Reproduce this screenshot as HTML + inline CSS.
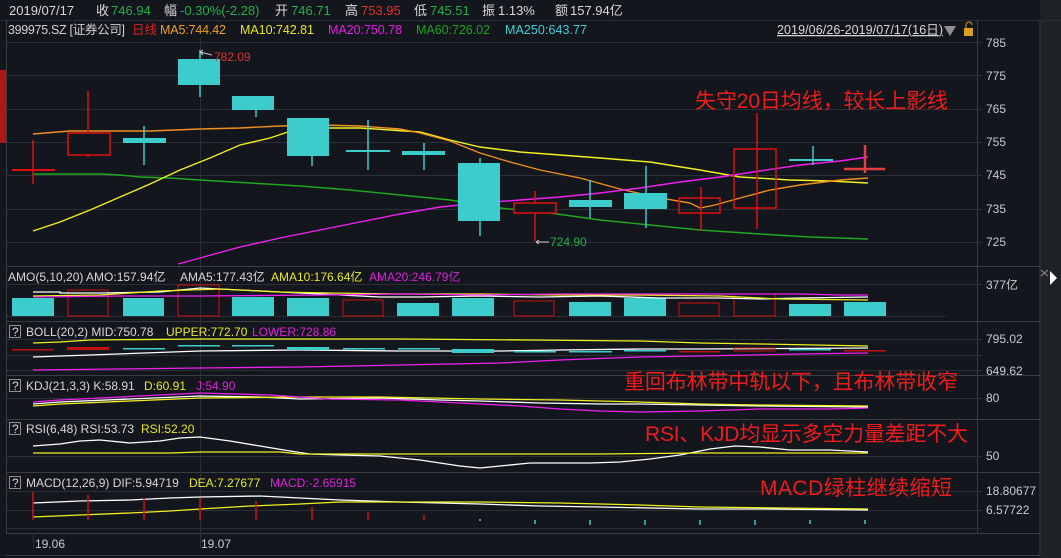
<!DOCTYPE html>
<html><head><meta charset="utf-8"><style>
html,body{margin:0;padding:0;background:#13161c;width:1061px;height:558px;overflow:hidden}
svg{display:block}
text{font-family:"Liberation Sans","Noto Sans CJK SC",sans-serif}
</style></head><body>
<svg width="1061" height="558" viewBox="0 0 1061 558" xmlns="http://www.w3.org/2000/svg">
<rect width="1061" height="558" fill="#13161c"/>
<rect x="1040" y="0" width="21" height="558" fill="#1f2227"/>
<line x1="1040" y1="20" x2="1040" y2="555" stroke="#3a3d42"/>
<rect x="0" y="70" width="6" height="73" fill="#b01818"/>
<line x1="0" y1="20.5" x2="1061" y2="20.5" stroke="#2a2d32"/>
<g font-size="13">
<text x="9" y="15" fill="#d8d8d8">2019/07/17</text>
<text x="96" y="15" fill="#d8d8d8">收</text><text x="111" y="15" fill="#21b04a">746.94</text>
<text x="164" y="15" fill="#d8d8d8">幅</text><text x="180" y="15" fill="#21b04a">-0.30%(-2.28)</text>
<text x="275" y="15" fill="#d8d8d8">开</text><text x="291" y="15" fill="#21b04a">746.71</text>
<text x="345" y="15" fill="#d8d8d8">高</text><text x="361" y="15" fill="#e03030">753.95</text>
<text x="414" y="15" fill="#d8d8d8">低</text><text x="430" y="15" fill="#21b04a">745.51</text>
<text x="482" y="15" fill="#d8d8d8">振</text><text x="498" y="15" fill="#d8d8d8">1.13%</text>
<text x="555" y="15" fill="#d8d8d8">额</text><text x="570" y="15" fill="#d8d8d8">157.94亿</text>
</g>
<g font-size="12.5">
<text x="8" y="34" fill="#d0d0d0" textLength="117">399975.SZ [证券公司]</text>
<text x="132" y="34" fill="#e02020">日线</text>
<text x="160" y="34" fill="#f0a020" textLength="66">MA5:744.42</text>
<text x="240" y="34" fill="#e8e820" textLength="74">MA10:742.81</text>
<text x="328" y="34" fill="#e020e0" textLength="74">MA20:750.78</text>
<text x="416" y="34" fill="#20a020" textLength="74">MA60:726.02</text>
<text x="505" y="34" fill="#40d0d8" textLength="82">MA250:643.77</text>
<text x="777" y="34" fill="#d8d8d8" text-decoration="underline" textLength="166">2019/06/26-2019/07/17(16日)</text>
</g>
<polygon points="944,26 956,26 950,36" fill="#909090"/>
<rect x="964" y="28" width="9" height="8" fill="#d8a020"/>
<path d="M966,28 v-3 a3,3 0 0 1 6,0" fill="none" stroke="#d8a020"/>
<line x1="6.5" y1="20" x2="6.5" y2="533" stroke="#3a3d42"/>
<line x1="977.5" y1="20" x2="977.5" y2="533" stroke="#3a3d42"/>
<g stroke="#3a3d42">
<line x1="6" y1="266.5" x2="1040" y2="266.5"/>
<line x1="6" y1="321.5" x2="1040" y2="321.5"/>
<line x1="6" y1="375.5" x2="1040" y2="375.5"/>
<line x1="6" y1="419.5" x2="1040" y2="419.5"/>
<line x1="6" y1="472.5" x2="1040" y2="472.5"/>
<line x1="6" y1="533.5" x2="1040" y2="533.5"/>
<line x1="6" y1="555.5" x2="1040" y2="555.5"/>
</g>
<g stroke="#2c2f34">
<line x1="7" y1="42.5" x2="982" y2="42.5"/><line x1="7" y1="75.5" x2="982" y2="75.5"/>
<line x1="7" y1="109.5" x2="982" y2="109.5"/><line x1="7" y1="142.5" x2="982" y2="142.5"/>
<line x1="7" y1="175.5" x2="982" y2="175.5"/><line x1="7" y1="209.5" x2="982" y2="209.5"/>
<line x1="7" y1="242.5" x2="982" y2="242.5"/>
<line x1="7" y1="284.5" x2="982" y2="284.5"/>
<line x1="7" y1="339.5" x2="982" y2="339.5"/><line x1="7" y1="355.5" x2="982" y2="355.5"/><line x1="7" y1="370.5" x2="982" y2="370.5"/>
<line x1="7" y1="398.5" x2="982" y2="398.5"/>
<line x1="7" y1="456.5" x2="982" y2="456.5"/>
<line x1="7" y1="491.5" x2="982" y2="491.5"/><line x1="7" y1="510.5" x2="982" y2="510.5"/><line x1="7" y1="528.5" x2="982" y2="528.5"/>
<line x1="200.5" y1="38" x2="200.5" y2="548"/>
<line x1="33.5" y1="533" x2="33.5" y2="548"/>
</g>
<g font-size="12" fill="#c8ccd0">
<text x="986" y="47">785</text><text x="986" y="80">775</text><text x="986" y="113">765</text>
<text x="986" y="146">755</text><text x="986" y="179">745</text><text x="986" y="213">735</text>
<text x="986" y="246">725</text>
<text x="986" y="289">377亿</text>
<text x="986" y="343">795.02</text><text x="986" y="375">649.62</text>
<text x="986" y="402">80</text><text x="986" y="460">50</text>
<text x="986" y="495">18.80677</text><text x="986" y="514">6.57722</text>
<text x="35" y="548">19.06</text><text x="201" y="548">19.07</text>
</g>
<path d="M1041,270 l7,6 M1048,270 l-7,6" stroke="#909090"/>
<polygon points="1050,271 1057,278 1050,285" fill="#ffffff"/>
<g fill="none" stroke-width="1.4">
<polyline stroke="#20a820" points="33,174 100,174 120,175 140,177 170,178 200,180 250,183 300,186 350,190 400,195 450,200 500,208 550,213 600,220 650,225 700,230 760,234 810,237 868,239"/>
<polyline stroke="#f0f020" points="33,231 60,222 90,210 120,197 150,184 180,170 210,158 240,145 270,138 300,128 330,128 360,128 390,130 420,132 450,140 480,147 520,152 560,155 600,158 650,162 700,170 740,177 790,180 830,181 868,183"/>
<polyline stroke="#f09020" points="33,134 70,131 110,131 150,131 200,129 240,128 280,126 320,125 360,126 400,129 420,133 450,141 480,153 510,162 540,170 580,178 620,189 660,198 690,203 700,208 715,205 740,198 770,190 800,185 840,180 868,178"/>
<polyline stroke="#f020f0" points="178,264 200,258 240,247 280,238 320,230 360,222 400,214 440,207 480,203 520,200 560,197 600,193 640,188 680,182 720,177 760,171 800,165 840,161 868,157"/>
</g>
<g stroke-width="1.5">
<line x1="33" y1="140" x2="33" y2="184" stroke="#e01010"/><line x1="12" y1="170" x2="55" y2="170" stroke="#e01010" stroke-width="2"/>
<line x1="88" y1="91" x2="88" y2="157" stroke="#e01010"/><rect x="68" y="133" width="42" height="22" fill="#13161c" stroke="#e01010"/>
<line x1="144" y1="126" x2="144" y2="165" stroke="#3ccccc"/><rect x="123" y="138" width="43" height="5" fill="#3ccccc" stroke="none"/>
<line x1="200" y1="50" x2="200" y2="97" stroke="#3ccccc"/><rect x="178" y="59" width="42" height="26" fill="#3ccccc" stroke="none"/>
<line x1="256" y1="105" x2="256" y2="117" stroke="#3ccccc"/><rect x="232" y="96" width="42" height="14" fill="#3ccccc" stroke="none"/>
<line x1="312" y1="118" x2="312" y2="166" stroke="#3ccccc"/><rect x="287" y="118" width="42" height="38" fill="#3ccccc" stroke="none"/>
<line x1="368" y1="120" x2="368" y2="170" stroke="#3ccccc"/><line x1="346" y1="151" x2="390" y2="151" stroke="#3ccccc" stroke-width="2"/>
<line x1="424" y1="143" x2="424" y2="170" stroke="#3ccccc"/><rect x="402" y="151" width="43" height="4" fill="#3ccccc" stroke="none"/>
<line x1="480" y1="158" x2="480" y2="236" stroke="#3ccccc"/><rect x="458" y="163" width="42" height="58" fill="#3ccccc" stroke="none"/>
<line x1="535" y1="191" x2="535" y2="241" stroke="#e01010"/><rect x="514" y="203" width="42" height="10" fill="#13161c" stroke="#e01010"/>
<line x1="590" y1="180" x2="590" y2="218" stroke="#3ccccc"/><rect x="569" y="200" width="43" height="7" fill="#3ccccc" stroke="none"/>
<line x1="646" y1="166" x2="646" y2="228" stroke="#3ccccc"/><rect x="624" y="193" width="43" height="16" fill="#3ccccc" stroke="none"/>
<line x1="701" y1="187" x2="701" y2="231" stroke="#e01010"/><rect x="679" y="198" width="41" height="15" fill="none" stroke="#e01010"/>
<line x1="757" y1="113" x2="757" y2="229" stroke="#e01010"/><rect x="734" y="149" width="42" height="59" fill="none" stroke="#e01010"/>
<line x1="813" y1="146" x2="813" y2="165" stroke="#3ccccc"/><line x1="789" y1="160" x2="833" y2="160" stroke="#3ccccc" stroke-width="2"/>
<line x1="865" y1="145" x2="865" y2="173" stroke="#e04040" stroke-width="2.5"/><line x1="844" y1="169" x2="885" y2="169" stroke="#e04040" stroke-width="2.5"/>
</g>
<text x="214" y="61" font-size="12" fill="#e03030">782.09</text>
<path d="M200,52 l12,3 M200,52 l3,-2 M200,52 l3,3" stroke="#cccccc" fill="none"/>
<text x="550" y="246" font-size="12" fill="#21b04a">724.90</text>
<path d="M536,242 h13 M536,242 l3,-2 M536,242 l3,2" stroke="#cccccc" fill="none"/>
<text x="8" y="281" font-size="12" fill="#d8d8d8">AMO(5,10,20) AMO:157.94亿</text>
<text x="180" y="281" font-size="12" fill="#d8d8d8">AMA5:177.43亿</text>
<text x="271" y="281" font-size="12" fill="#e8e820">AMA10:176.64亿</text>
<text x="369" y="281" font-size="12" fill="#e020e0">AMA20:246.79亿</text>
<line x1="7" y1="316.5" x2="947" y2="316.5" stroke="#c01010" stroke-dasharray="1,1"/>
<g>
<rect x="12" y="298" width="42" height="18" fill="#3ccccc"/>
<rect x="68" y="290" width="40" height="26" fill="none" stroke="#d01010"/>
<rect x="123" y="298" width="41" height="18" fill="#3ccccc"/>
<rect x="178" y="285" width="41" height="31" fill="none" stroke="#d01010"/>
<rect x="232" y="297" width="42" height="19" fill="#3ccccc"/>
<rect x="287" y="298" width="42" height="18" fill="#3ccccc"/>
<rect x="343" y="300" width="40" height="16" fill="none" stroke="#d01010"/>
<rect x="397" y="303" width="42" height="13" fill="#3ccccc"/>
<rect x="452" y="298" width="42" height="18" fill="#3ccccc"/>
<rect x="514" y="301" width="40" height="15" fill="none" stroke="#d01010"/>
<rect x="569" y="302" width="42" height="14" fill="#3ccccc"/>
<rect x="624" y="298" width="42" height="18" fill="#3ccccc"/>
<rect x="679" y="303" width="40" height="13" fill="none" stroke="#d01010"/>
<rect x="734" y="294" width="41" height="22" fill="none" stroke="#d01010"/>
<rect x="789" y="304" width="42" height="12" fill="#3ccccc"/>
<rect x="844" y="302" width="42" height="14" fill="#3ccccc"/>
</g>
<g fill="none" stroke-width="1.3">
<polyline stroke="#ffffff" points="33,292 60,292 60,293 100,293 160,292 200,288 260,291 300,293 340,295 380,297 420,297 480,296 540,297 600,296 660,298 720,298 760,299 800,298 868,297"/>
<polyline stroke="#f0f020" points="33,296 100,295 160,291 220,289 280,292 330,293 400,294 480,294 560,295 640,295 720,296 780,299 868,300"/>
<polyline stroke="#f020f0" points="33,297 120,296 200,296 320,295 400,294 480,295 560,294 640,294 720,294 800,294 840,295 868,295"/>
</g>
<g font-size="12">
<rect x="9.5" y="325.5" width="11" height="12" fill="none" stroke="#909090"/><text x="12" y="336" fill="#d8d8d8">?</text>
<text x="26" y="336" fill="#d8d8d8">BOLL(20,2) MID:750.78</text><text x="166" y="336" fill="#e8e820">UPPER:772.70</text><text x="252" y="336" fill="#e020e0">LOWER:728.86</text>
<rect x="9.5" y="379.5" width="11" height="12" fill="none" stroke="#909090"/><text x="12" y="390" fill="#d8d8d8">?</text>
<text x="26" y="390" fill="#d8d8d8">KDJ(21,3,3) K:58.91</text><text x="144" y="390" fill="#e8e820">D:60.91</text><text x="196" y="390" fill="#e020e0">J:54.90</text>
<rect x="9.5" y="422.5" width="11" height="12" fill="none" stroke="#909090"/><text x="12" y="433" fill="#d8d8d8">?</text>
<text x="26" y="433" fill="#d8d8d8">RSI(6,48) RSI:53.73</text><text x="141" y="433" fill="#e8e820">RSI:52.20</text>
<rect x="9.5" y="476.5" width="11" height="12" fill="none" stroke="#909090"/><text x="12" y="487" fill="#d8d8d8">?</text>
<text x="26" y="487" fill="#d8d8d8">MACD(12,26,9) DIF:5.94719</text><text x="189" y="487" fill="#e8e820">DEA:7.27677</text><text x="270" y="487" fill="#e020e0">MACD:-2.65915</text>
</g>
<g fill="none" stroke-width="1.3">
<polyline stroke="#f0f020" points="33,343 60,342 90,340 200,339 300,339 400,339 530,340 640,341 700,343 760,344 868,346"/>
<polyline stroke="#ffffff" points="33,357 60,356 90,355 200,351 300,350 400,351 500,351 560,350 640,349 700,349 868,348"/>
<polyline stroke="#f020f0" points="33,370 200,368 300,367 400,365 500,363 560,360 640,357 700,356 800,354 868,353"/>
</g>
<g>
<rect x="12" y="349" width="42" height="1.5" fill="#c01010"/>
<rect x="67" y="347" width="42" height="3" fill="#c01010"/>
<rect x="123" y="348" width="42" height="1.5" fill="#3ccccc"/>
<rect x="178" y="345" width="42" height="1.5" fill="#3ccccc"/>
<rect x="232" y="345" width="42" height="1.5" fill="#3ccccc"/>
<rect x="287" y="347" width="42" height="3" fill="#3ccccc"/>
<rect x="343" y="348" width="42" height="1.5" fill="#3ccccc"/>
<rect x="398" y="348" width="42" height="1.5" fill="#3ccccc"/>
<rect x="452" y="349" width="42" height="4" fill="#3ccccc"/>
<rect x="514" y="351" width="42" height="1.5" fill="#3ccccc"/>
<rect x="569" y="351" width="43" height="1.5" fill="#3ccccc"/>
<rect x="624" y="350" width="42" height="1.5" fill="#3ccccc"/>
<rect x="679" y="351" width="41" height="1.5" fill="#c01010"/>
<rect x="734" y="348" width="41" height="3" fill="none" stroke="#c01010"/>
<rect x="789" y="349" width="42" height="1.5" fill="#3ccccc"/>
<rect x="844" y="350" width="42" height="1.5" fill="#c01010"/>
</g>
<g fill="none" stroke-width="1.3">
<polyline stroke="#ffffff" points="33,404 60,402 200,396 260,397 300,399 380,398 440,400 480,401 540,403 600,404 640,404 700,405 760,406 868,407"/>
<polyline stroke="#f0f020" points="33,406 60,404 200,398 300,397 380,397 480,399 560,400 640,402 700,404 760,405 868,406"/>
<polyline stroke="#f020f0" points="33,402 60,400 200,393 270,395 330,399 400,400 460,403 520,406 560,409 600,411 640,412 700,411 760,409 830,409 868,408"/>
</g>
<g fill="none" stroke-width="1.3">
<polyline stroke="#ffffff" points="33,446 60,444 80,441 100,440 130,443 160,441 180,438 200,437 230,441 260,446 290,451 310,454 340,455 380,456 420,460 460,466 480,468 500,466 530,463 590,463 620,462 650,459 680,455 710,449 735,446 760,447 790,450 830,450 868,452"/>
<polyline stroke="#f0f020" points="33,453 170,453 200,452 280,452 300,454 420,454 600,454 700,453 868,453"/>
</g>
<g fill="none" stroke-width="1.3">
<polyline stroke="#ffffff" points="33,503 80,501 130,500 170,498 200,497 260,496 300,498 340,500 400,502 480,504 540,506 600,507 700,509 760,509 868,510"/>
<polyline stroke="#f0f020" points="33,517 80,515 130,513 170,511 200,509 250,506 300,504 340,502 480,502 560,503 640,505 700,507 868,509"/>
</g>
<g stroke-width="1.5">
<line x1="33" y1="492" x2="33" y2="520" stroke="#d01010"/>
<line x1="88" y1="495" x2="88" y2="520" stroke="#d01010"/>
<line x1="144" y1="498" x2="144" y2="520" stroke="#d01010"/>
<line x1="200" y1="498" x2="200" y2="520" stroke="#d01010"/>
<line x1="256" y1="501" x2="256" y2="520" stroke="#d01010"/>
<line x1="312" y1="507" x2="312" y2="520" stroke="#d01010"/>
<line x1="368" y1="512" x2="368" y2="520" stroke="#d01010"/>
<line x1="424" y1="515" x2="424" y2="520" stroke="#d01010"/>
<line x1="480" y1="519" x2="480" y2="521" stroke="#3ccccc"/>
<line x1="535" y1="520" x2="535" y2="524" stroke="#3ccccc"/>
<line x1="590" y1="520" x2="590" y2="525" stroke="#3ccccc"/>
<line x1="645" y1="520" x2="645" y2="525" stroke="#3ccccc"/>
<line x1="700" y1="520" x2="700" y2="525" stroke="#3ccccc"/>
<line x1="755" y1="520" x2="755" y2="525" stroke="#3ccccc"/>
<line x1="810" y1="520" x2="810" y2="524" stroke="#3ccccc"/>
<line x1="865" y1="520" x2="865" y2="524" stroke="#3ccccc"/>
</g>
<g fill="#ee1c1c" font-size="21">
<text x="695" y="108" textLength="253">失守20日均线，较长上影线</text>
<text x="624" y="389" textLength="334">重回布林带中轨以下，且布林带收窄</text>
<text x="645" y="441" textLength="323">RSI、KJD均显示多空力量差距不大</text>
<text x="760" y="495" textLength="192">MACD绿柱继续缩短</text>
</g>
</svg>
</body></html>
